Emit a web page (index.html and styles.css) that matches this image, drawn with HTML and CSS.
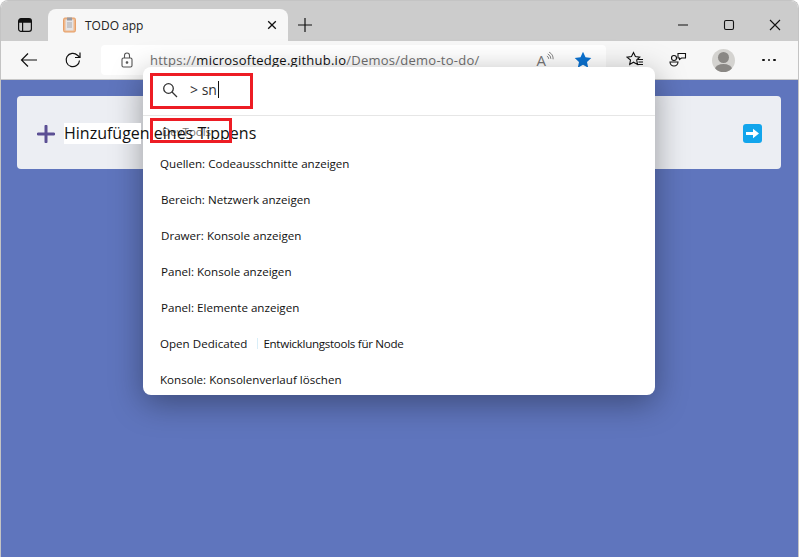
FILE: index.html
```html
<!DOCTYPE html>
<html lang="en">

<head>
    <meta charset="UTF-8">
    <title>TODO app</title>
    <link rel="stylesheet" href="styles.css">
</head>

<body>
    <div class="window">
        <div class="titlebar">
            <div class="tab-actions">
                <svg width="16" height="16" viewBox="0 0 16 16" fill="none" stroke="#111" stroke-width="1.2">
                    <rect x="1.6" y="1.6" width="12.8" height="12.8" rx="2.4" />
                    <path d="M1.6 5.1h12.8M5.6 5.1v9.3" />
                    <path d="M2 2h12v3H2z" fill="#111" stroke="none" />
                </svg>
            </div>
            <div class="tab">
                <svg class="favicon" width="14" height="16" viewBox="0 0 14 16">
                    <rect x="0.5" y="1" width="12" height="14" rx="1.5" fill="#f1b98c" stroke="#e5a06a" />
                    <rect x="2.5" y="2.5" width="8" height="11" fill="#e4e4e6" />
                    <rect x="4" y="0.5" width="5" height="3" fill="#9a9aa0" />
                    <path d="M4 6h5M4 8h5M4 10h5" stroke="#a9a9ae" stroke-width="1" />
                </svg>
                <span class="tab-title">TODO app</span>
                <svg class="tab-close" width="10" height="10" viewBox="0 0 10 10" stroke="#111" stroke-width="1.3">
                    <path d="M1.2 1.2l7.6 7.6M8.8 1.2l-7.6 7.6" />
                </svg>
            </div>
            <svg class="new-tab" width="16" height="16" viewBox="0 0 16 16" stroke="#111" stroke-width="1.2">
                <path d="M8 1v14M1 8h14" />
            </svg>
            <div class="window-controls">
                <svg width="12" height="12" viewBox="0 0 12 12" stroke="#111" stroke-width="1.1">
                    <path d="M1 6h10" />
                </svg>
                <svg width="12" height="12" viewBox="0 0 12 12" fill="none" stroke="#111" stroke-width="1.1">
                    <rect x="1.5" y="1.5" width="9" height="9" rx="1.5" />
                </svg>
                <svg width="12" height="12" viewBox="0 0 12 12" stroke="#111" stroke-width="1.1">
                    <path d="M1 1l10 10M11 1L1 11" />
                </svg>
            </div>
        </div>

        <div class="toolbar">
            <svg class="nav-icon" width="18" height="16" viewBox="0 0 18 16" fill="none" stroke="#111" stroke-width="1.2">
                <path d="M17 8H1.5M8 1.5L1.5 8 8 14.500" />
            </svg>
            <svg class="nav-icon" width="18" height="18" viewBox="0 0 18 18" fill="none" stroke="#111" stroke-width="1.2">
                <path d="M15.500 9.500a6.700 6.700 0 1 1-2-5.300L16 6.500" />
                <path d="M16 1.500v5h-5" />
            </svg>
            <div class="addressbar">
                <svg class="lock" width="12" height="16" viewBox="0 0 12 16" fill="none" stroke="#555" stroke-width="1.1">
                    <rect x="1" y="6" width="10" height="9" rx="1.5" />
                    <path d="M3.500 6V3.500a2.500 2.500 0 0 1 5 0V6" />
                    <circle cx="6" cy="10.500" r="0.8" fill="#555" />
                </svg>
                <span class="url"><span class="url-dim">https://</span>microsoftedge.github.io<span class="url-dim">/Demos/demo-to-do/</span></span>
                <span class="read-aloud">A<svg width="8" height="13" viewBox="0 0 9 13" fill="none" stroke="#777" stroke-width="1">
                        <path d="M1 5a3 3 0 0 1 2 3M2 2.500a6 6 0 0 1 3.500 5.500M3.500 0.500a8.500 8.500 0 0 1 4.500 8" />
                    </svg></span>
                <svg class="star" width="18" height="18" viewBox="0 0 18 18">
                    <path d="M9 0.800l2.500 5.400 5.800.7-4.300 4 1.200 5.800L9 13.800l-5.200 2.900L5 10.900.7 6.900l5.800-.7z" fill="#0b72d1" />
                </svg>
            </div>
            <div class="toolbar-right">
                <svg width="18" height="18" viewBox="0 0 18 18" fill="none" stroke="#111" stroke-width="1.1">
                    <path d="M7.500 1.500l1.900 4.100 4.300.5-3 2.900.8 4.400-4-2.200-3.800 2.200.8-4.400L1 6.100l4.500-.5z" />
                    <path d="M12 8.500h5M12.500 11h4.500M11.500 13.500H17" />
                </svg>
                <svg width="18" height="18" viewBox="0 0 18 18" fill="none" stroke="#111" stroke-width="1.1">
                    <circle cx="5" cy="7" r="2.500" />
                    <path d="M1 11h8a4 4 0 0 1-8 0z" />
                    <path d="M9 2.500h7.500v4.500h-4l-2 1.500v-1.500h-1.500z" />
                </svg>
                <div class="avatar">
                    <div class="avatar-head"></div>
                    <div class="avatar-body"></div>
                </div>
                <div class="more"><i></i><i></i><i></i></div>
            </div>
        </div>

        <div class="content">
            <div class="todo-card">
                <svg width="18" height="18" viewBox="0 0 18 18" fill="#5b4f94">
                    <path d="M7.500 1.200a1.500 1.500 0 0 1 3 0v6.300h6.300a1.500 1.500 0 0 1 0 3h-6.300v6.300a1.500 1.500 0 0 1-3 0v-6.300H1.200a1.500 1.500 0 0 1 0-3h6.300z" />
                </svg>
                <span class="todo-text">Hinzufügen eines Tippens</span>
                <div class="go-button">
                    <svg width="13" height="11" viewBox="0 0 13 11" fill="#fff">
                        <path d="M0 4h7V0.800L13 5.500 7 10.200V7H0z" />
                    </svg>
                </div>
            </div>
        </div>

        <div class="palette">
            <div class="palette-search">
                <svg width="16" height="16" viewBox="0 0 16 16" fill="none" stroke="#333" stroke-width="1.3">
                    <circle cx="6.500" cy="6.500" r="4.800" />
                    <path d="M10 10l5 5" />
                </svg>
                <span class="palette-query">&gt; sn</span>
            </div>
            <div class="palette-group">DevTools</div>
            <div class="palette-list">
                <div class="palette-item">Quellen: Codeausschnitte anzeigen</div>
                <div class="palette-item nudge">Bereich: Netzwerk anzeigen</div>
                <div class="palette-item nudge">Drawer: Konsole anzeigen</div>
                <div class="palette-item nudge">Panel: Konsole anzeigen</div>
                <div class="palette-item nudge">Panel: Elemente anzeigen</div>
                <div class="palette-item">Open Dedicated<span class="split"></span><span class="node-name">Entwicklungstools für Node</span></div>
                <div class="palette-item">Konsole: Konsolenverlauf löschen</div>
            </div>
        </div>

        <div class="callout callout-search"></div>
        <div class="callout callout-group"></div>
    </div>
</body>

</html>
```

FILE: styles.css
```css
html,
body {
    margin: 0;
    height: 100%;
    background: #fff;
    overflow: hidden;
}

body {
    font-family: "Open Sans", "Noto Sans", sans-serif;
    color: #111;
}

.window {
    position: relative;
    display: flex;
    flex-direction: column;
    height: 100%;
    box-sizing: border-box;
    border: 1px solid #c4c4c4;
    border-bottom: 0;
    border-radius: 8px 8px 0 0;
    overflow: hidden;
}

.titlebar {
    display: flex;
    align-items: flex-end;
    flex: none;
    height: 40px;
    background: #cccccc;
}

.tab-actions {
    display: flex;
    align-items: center;
    justify-content: center;
    width: 47px;
    height: 31px;
    padding-bottom: 1px;
}

.tab {
    display: flex;
    align-items: center;
    width: 240px;
    height: 32px;
    box-sizing: border-box;
    padding: 0 11px 0 15px;
    background: #f7f7f7;
    border-radius: 8px 8px 0 0;
}

.tab-title {
    flex: 1;
    margin-left: 8px;
    font-size: 12px;
    color: #222;
}

.new-tab {
    margin: 0 0 8px 9px;
}

.window-controls {
    display: flex;
    gap: 34px;
    margin-left: auto;
    padding: 0 17px 10px 0;
}

.toolbar {
    display: flex;
    align-items: center;
    flex: none;
    height: 38px;
    background: #f7f7f7;
    border-bottom: 1px solid #c8c8c8;
}

.nav-icon {
    flex: none;
    margin-left: 19px;
}

.nav-icon + .nav-icon {
    margin-left: 26px;
}

.addressbar {
    display: flex;
    align-items: center;
    width: 505px;
    height: 30px;
    margin-left: 19px;
    padding-right: 14px;
    box-sizing: border-box;
    background: #fff;
    border-radius: 4px;
}

.lock {
    margin-left: 20px;
}

.url {
    flex: 1;
    margin-left: 17px;
    font-size: 13px;
    letter-spacing: 0.25px;
    color: #111;
    white-space: nowrap;
}

.url-dim {
    color: #6f6f6f;
}

.read-aloud {
    display: flex;
    align-items: flex-start;
    margin-right: 20px;
    font-size: 15px;
    color: #777;
    line-height: 18px;
}

.star {
    flex: none;
}

.toolbar-right {
    display: flex;
    align-items: center;
    gap: 25px;
    margin-left: 20px;
}

.avatar {
    position: relative;
    width: 23px;
    height: 23px;
    overflow: hidden;
    border-radius: 50%;
    background: #d4d3d0;
}

.avatar-head {
    width: 11px;
    height: 11px;
    margin: 3px auto 0;
    border-radius: 50%;
    background: #8a8885;
}

.avatar-body {
    width: 17px;
    height: 10px;
    margin: 1px auto 0;
    border-radius: 50%;
    background: #8a8885;
}

.more {
    display: flex;
    gap: 3px;
    margin-left: 2px;
}

.more i {
    width: 2.500px;
    height: 2.500px;
    border-radius: 50%;
    background: #111;
}

.content {
    flex: 1;
    padding: 16px 17px 16px 16px;
    background: #5f75bd;
}

.todo-card {
    display: flex;
    align-items: center;
    height: 73px;
    box-sizing: border-box;
    padding: 2px 19px 0 20px;
    border-radius: 4px;
    background: #eceef3;
}

.todo-text {
    position: relative;
    z-index: 3;
    margin-left: 9px;
    font-size: 16px;
    line-height: 21px;
    color: #111;
    background: linear-gradient(#fff, #fff) no-repeat 0 0 / 77px 100%;
}

.go-button {
    display: flex;
    align-items: center;
    justify-content: center;
    width: 19px;
    height: 19px;
    margin-left: auto;
    border-radius: 3px;
    background: #12a5ec;
}

.palette {
    position: absolute;
    z-index: 2;
    left: 142px;
    top: 66px;
    width: 512px;
    height: 328px;
    overflow: hidden;
    border-radius: 8px;
    background: #fff;
    box-shadow: 0 8px 32px rgba(0, 0, 0, 0.36);
}

.palette-search {
    display: flex;
    align-items: center;
    height: 49px;
    box-sizing: border-box;
    padding: 0 0 3px 19px;
    border-bottom: 1px solid #e6e6e6;
}

.palette-query {
    margin-left: 12px;
    padding-right: 1px;
    border-right: 1px solid #111;
    font-size: 14px;
    line-height: 17px;
    color: #333;
}

.palette-group {
    padding: 8px 0 0 19px;
    font-size: 11.500px;
    line-height: 15px;
    color: #777;
}

.palette-list {
    margin-top: 6px;
}

.palette-item {
    display: flex;
    align-items: center;
    height: 36px;
    padding-left: 17px;
    font-size: 11.600px;
    color: #111;
    white-space: nowrap;
}

.palette-item.nudge {
    padding-left: 18px;
}

.split {
    width: 1px;
    height: 11px;
    margin: 0 5px 0 10px;
    background: #d9eef8;
}

.node-name {
    letter-spacing: -0.3px;
}

.callout {
    position: absolute;
    z-index: 4;
    box-sizing: border-box;
    border: 3px solid #ed1c24;
}

.callout-search {
    left: 149px;
    top: 72px;
    width: 103px;
    height: 36px;
}

.callout-group {
    left: 149px;
    top: 117px;
    width: 82px;
    height: 25px;
}
```
